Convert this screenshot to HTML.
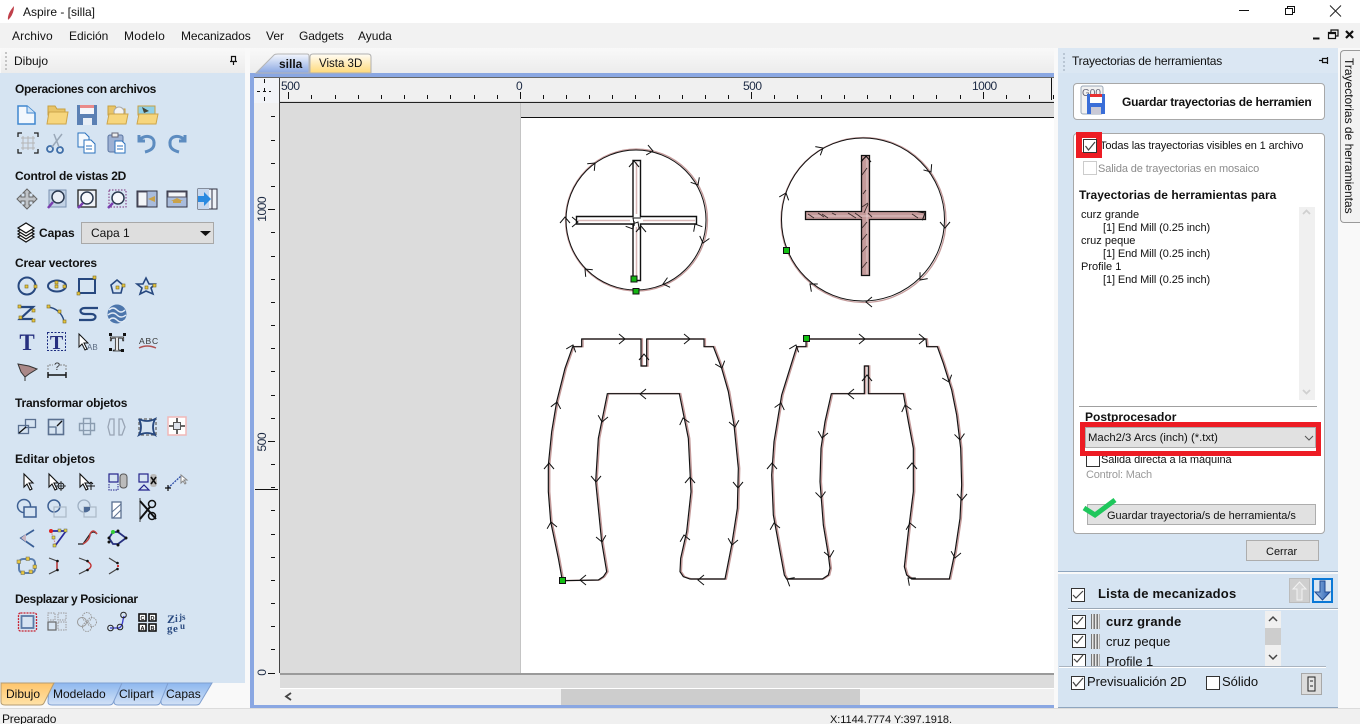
<!DOCTYPE html>
<html><head><meta charset="utf-8"><title>Aspire - [silla]</title>
<style>
html,body{margin:0;padding:0;background:#f9f9f9;width:1360px;height:724px;overflow:hidden}
body{position:relative;font:12px/14px "Liberation Sans",sans-serif;color:#111}
.a{position:absolute}
.t{position:absolute;white-space:nowrap;line-height:14px;font-size:12px}
.s{font-size:11px;margin-top:1px}
.b{font-weight:bold}
.cb{position:absolute;width:12px;height:12px;border:1px solid #333;background:#fff;box-sizing:content-box}
svg{position:absolute;overflow:visible}
</style></head><body>

<div class="a" style="left:0;top:0;width:1360px;height:23px;background:#fff"></div>
<div class="a" style="left:0;top:23px;width:1360px;height:25px;background:#f2f2f2"></div>
<div class="t" style="left:23px;top:5px">Aspire - [silla]</div>
<div class="t" style="left:12px;top:29px;letter-spacing:.1px">Archivo</div>
<div class="t" style="left:69px;top:29px">Edición</div>
<div class="t" style="left:124px;top:29px;letter-spacing:.3px">Modelo</div>
<div class="t" style="left:181px;top:29px;letter-spacing:-.1px">Mecanizados</div>
<div class="t" style="left:266px;top:29px">Ver</div>
<div class="t" style="left:299px;top:29px;letter-spacing:-.1px">Gadgets</div>
<div class="t" style="left:358px;top:29px">Ayuda</div>

<!-- backgrounds -->
<div class="a" style="left:0;top:48px;width:1360px;height:660px;background:#f9f9f9"></div>
<div class="a" style="left:0;top:73px;width:245px;height:610px;background:#d6e4f2"></div>
<div class="a" style="left:1px;top:48px;width:244px;height:25px;background:linear-gradient(#f9f9f9,#ececec)"></div>
<div class="t" style="left:14px;top:54px">Dibujo</div>
<div class="a" style="left:250px;top:48px;width:804px;height:25px;background:linear-gradient(#f9f9f9,#ececec)"></div>

<!-- canvas frame -->
<div class="a" style="left:250px;top:73px;width:804px;height:635px;background:#8aa7e2"></div>
<div class="a" style="left:254px;top:77px;width:800px;height:628px;background:#f0f0f0"></div>
<div class="a" style="left:254px;top:77px;width:800px;height:1px;background:#666"></div>
<div class="a" style="left:254px;top:78px;width:25px;height:25px;background:#f2f4f8"></div>
<div class="a" style="left:279px;top:101px;width:775px;height:1px;background:#ddd"></div>
<div class="a" style="left:279px;top:102px;width:775px;height:1px;background:#222"></div>
<div class="a" style="left:279px;top:78px;width:1px;height:595px;background:#444"></div>
<div class="a" style="left:280px;top:103px;width:240px;height:570px;background:#dcdcdc"></div>
<div class="a" style="left:520px;top:103px;width:1px;height:570px;background:#c4c4c4"></div>
<div class="a" style="left:521px;top:103px;width:533px;height:14px;background:#dcdcdc"></div>
<div class="a" style="left:521px;top:117px;width:533px;height:1px;background:#111"></div>
<div class="a" style="left:521px;top:118px;width:533px;height:555px;background:#fff"></div>
<div class="a" style="left:280px;top:673px;width:774px;height:2px;background:#9a9a9a"></div>
<div class="a" style="left:280px;top:675px;width:774px;height:13px;background:#dcdcdc"></div>
<div class="a" style="left:280px;top:688px;width:774px;height:1px;background:#fff"></div>
<div class="a" style="left:280px;top:689px;width:774px;height:16px;background:#f0f0f0"></div>
<div class="a" style="left:561px;top:689px;width:299px;height:16px;background:#cdcdcd"></div>

<!-- canvas tabs -->
<svg style="left:250px;top:48px" width="130" height="26">
<defs>
<linearGradient id="g1" x1="0" y1="0" x2="0" y2="1"><stop offset="0" stop-color="#f4f7fd"/><stop offset="1" stop-color="#8aa7e2"/></linearGradient>
<linearGradient id="g2" x1="0" y1="0" x2="0" y2="1"><stop offset="0" stop-color="#fffdf6"/><stop offset="1" stop-color="#ffd978"/></linearGradient>
</defs>
<path d="M6 25L24 7Q25 6 28 6H57Q59 6 59 8V25Z" fill="url(#g1)" stroke="#b5b5b5"/>
<path d="M60 25V9Q60 6 63 6H118Q121 6 121 9V25Z" fill="url(#g2)" stroke="#b0b0b0"/>
</svg>
<div class="t b" style="left:279px;top:57px">silla</div>
<div class="t" style="left:319px;top:57px;font-size:11.500px">Vista 3D</div>

<!-- rulers -->
<div class="t" style="left:281px;top:79px;color:#1c2a44;letter-spacing:-.5px">500</div>
<div class="t" style="left:516px;top:79px;color:#1c2a44">0</div>
<div class="t" style="left:743px;top:79px;color:#1c2a44;letter-spacing:-.5px">500</div>
<div class="t" style="left:972px;top:79px;color:#1c2a44;letter-spacing:-.5px">1000</div>
<div class="t" style="writing-mode:vertical-rl;transform:rotate(180deg);line-height:14px;left:255px;top:197px;color:#1c2a44;letter-spacing:-.5px">1000</div>
<div class="t" style="writing-mode:vertical-rl;transform:rotate(180deg);line-height:14px;left:255px;top:433px;color:#1c2a44;letter-spacing:-.5px">500</div>
<div class="t" style="writing-mode:vertical-rl;transform:rotate(180deg);line-height:14px;left:255px;top:669px;color:#1c2a44">0</div>

<svg style="left:0;top:0" width="1360" height="724">
<g stroke="#111" stroke-width="1" fill="none">
<path d="M288.500 92V99M311.500 95V99M335.500 95V99M358.500 95V99M381.500 95V99M404.500 95V99M427.500 95V99M450.500 95V99M474.500 95V99M497.500 95V99M520.500 92V99M543.500 95V99M566.500 95V99M589.500 95V99M612.500 95V99M635.500 95V99M659.500 95V99M682.500 95V99M705.500 95V99M728.500 95V99M751.500 92V99M774.500 95V99M797.500 95V99M821.500 95V99M844.500 95V99M867.500 95V99M890.500 95V99M913.500 95V99M936.500 95V99M960.500 95V99M983.500 92V99M1006.500 95V99M1029.500 95V99M1053.500 95V99M1051.500 78V100"/>
<path d="M271 116.500H275M271 140.500H275M271 163.500H275M271 186.500H275M268 209.500H275M271 232.500H275M271 256.500H275M271 279.500H275M271 302.500H275M271 325.500H275M271 348.500H275M271 371.500H275M271 395.500H275M271 418.500H275M268 441.500H275M271 464.500H275M271 487.500H275M271 510.500H275M271 534.500H275M271 557.500H275M271 580.500H275M271 603.500H275M271 626.500H275M271 649.500H275M268 673.500H275M255 489.500H278"/>
<path d="M264.500 79V102" stroke-dasharray="4 5"/><path d="M257 91.500H271" stroke-dasharray="3 3"/>
</g>
<path d="M291 693L286 696.500L291 700" fill="none" stroke="#444" stroke-width="1.800"/>

<defs>
<path id="ar" d="M-6 -5L0 0L-6 5" fill="none" stroke="#111" stroke-width="1"/>
<polygon id="p1" points="97,767 85,700 62,590 55,500 55,420 65,320 80,230 105,130 128,65 155,65 155,42 333,42 333,123 350,123 350,42 522,42 522,65 550,65 575,130 595,200 612,300 625,430 622,550 605,660 585,762 480,762 460,755 450,740 452,700 470,620 483,500 475,340 448,206 232,206 205,340 197,470 215,650 230,740 220,755 205,765"/>
<polygon id="p2" points="140,42 498,42 500,65 532,65 550,115 575,195 590,270 602,370 605,480 600,580 585,680 568,762 455,762 440,750 433,725 445,620 460,500 460,370 445,290 430,206 325,206 325,123 313,123 313,206 214,206 195,290 183,370 180,470 190,600 205,690 210,730 205,750 187,762 80,762 73,750 60,680 40,570 35,450 42,350 65,210 110,65 138,65 138,42"/>
</defs>

<!-- circle 1 -->
<circle cx="636.500" cy="220" r="71" fill="none" stroke="#c49a9a" stroke-width="1.300"/>
<circle cx="636" cy="220" r="70" fill="none" stroke="#111" stroke-width="1"/>
<path d="M633 160.500H640.500V216.500H696.500V224H640.500V280.500H633V224H576.500V216.500H633Z" fill="#fff" stroke="#111" stroke-width="1.400"/>
<path d="M636.500 162V214M636.500 227V279M578 220.500H630M643 220.500H695" stroke="#d9b8b8" stroke-width="1.500"/>
<g>
<use href="#ar" transform="translate(653 151) rotate(10)"/><use href="#ar" transform="translate(698 185) rotate(60)"/><use href="#ar" transform="translate(703 243) rotate(105)"/><use href="#ar" transform="translate(663 284) rotate(165)"/><use href="#ar" transform="translate(585 269) rotate(-135)"/><use href="#ar" transform="translate(565 217) rotate(-90)"/><use href="#ar" transform="translate(595 163) rotate(-45)"/>
<use href="#ar" transform="translate(634 161) rotate(-90)"/><use href="#ar" transform="translate(578 222) rotate(0)"/><use href="#ar" transform="translate(695 224) rotate(-120)"/><use href="#ar" transform="translate(633 218) rotate(-140)"/><use href="#ar" transform="translate(638 222) rotate(-60)"/><use href="#ar" transform="translate(633 229) rotate(60)"/><use href="#ar" transform="translate(641 226) rotate(-90)"/>
</g>
<rect x="631" y="276" width="6" height="6" fill="#13b513" stroke="#111"/>
<rect x="633" y="288.500" width="6" height="5.500" fill="#13b513" stroke="#111"/>

<!-- circle 2 -->
<circle cx="863.500" cy="220" r="82.500" fill="none" stroke="#c49a9a" stroke-width="1.300"/>
<circle cx="863" cy="219.500" r="81.500" fill="none" stroke="#111" stroke-width="1"/>
<path d="M861.500 155.500H869.500V211.500H925.500V219.500H869.500V275.500H861.500V219.500H805.500V211.500H861.500Z" fill="#c49a9a" stroke="#111" stroke-width="1.300"/>
<path d="M867 157V274M807 216H924" stroke="#f1e3e3" stroke-width=".8" opacity=".8"/>
<path d="M862 160L867 156M862 175L867 168M863 194L866 190M862 207L868 203M864 213L868 204M862 228L867 222M862 240L867 234M862 252L867 246M862 268L867 262M808 214L814 218M818 213L824 217M832 213L836 215M848 213L856 218M855 213L862 218M828 218L822 214M868 213L872 217M912 214L918 218" stroke="#3a2a2a" stroke-width=".9" fill="none"/>
<g>
<use href="#ar" transform="translate(823 148) rotate(-30)"/><use href="#ar" transform="translate(931 172) rotate(55)"/><use href="#ar" transform="translate(945 228) rotate(90)"/><use href="#ar" transform="translate(920 280) rotate(130)"/><use href="#ar" transform="translate(866 302) rotate(180)"/><use href="#ar" transform="translate(810 284) rotate(-140)"/><use href="#ar" transform="translate(786 193) rotate(-70)"/><use href="#ar" transform="translate(925 213) rotate(-30)"/><use href="#ar" transform="translate(866 156) rotate(-90)"/>
</g>
<rect x="783.500" y="247.500" width="6" height="6" fill="#13c013" stroke="#111"/>

<!-- pants 1 -->
<g transform="translate(530 325) scale(.33333)">
<use href="#p1" transform="translate(4 0)" fill="none" stroke="#c49a9a" stroke-width="4.500"/>
<use href="#p1" fill="none" stroke="#111" stroke-width="3.500"/>
</g>
<g transform="translate(530 325)">
<use href="#ar" transform="translate(95 14) rotate(0)"/><use href="#ar" transform="translate(160 14) rotate(0)"/><use href="#ar" transform="translate(43 20) rotate(-70)"/><use href="#ar" transform="translate(27 77) rotate(-78)"/><use href="#ar" transform="translate(19 138) rotate(-90)"/><use href="#ar" transform="translate(21 197) rotate(-100)"/>
<use href="#ar" transform="translate(192 43) rotate(70)"/><use href="#ar" transform="translate(205 102) rotate(80)"/><use href="#ar" transform="translate(208 163) rotate(90)"/><use href="#ar" transform="translate(202 220) rotate(100)"/>
<use href="#ar" transform="translate(50 255) rotate(180)"/><use href="#ar" transform="translate(168 255) rotate(180)"/><use href="#ar" transform="translate(110 69) rotate(180)"/>
<use href="#ar" transform="translate(72 97) rotate(100)"/><use href="#ar" transform="translate(66 157) rotate(90)"/><use href="#ar" transform="translate(72 217) rotate(80)"/>
<use href="#ar" transform="translate(160 152) rotate(-90)"/><use href="#ar" transform="translate(154 210) rotate(-100)"/><use href="#ar" transform="translate(153 93) rotate(-105)"/><use href="#ar" transform="translate(114 29) rotate(-90)"/>
</g>
<rect x="559.500" y="577.500" width="6" height="6" fill="#13c013" stroke="#111"/>

<!-- pants 2 -->
<g transform="translate(760 325) scale(.33333)">
<use href="#p2" transform="translate(4 0)" fill="none" stroke="#c49a9a" stroke-width="4.500"/>
<use href="#p2" fill="none" stroke="#111" stroke-width="3.500"/>
</g>
<g transform="translate(760 325)">
<use href="#ar" transform="translate(105 14) rotate(0)"/><use href="#ar" transform="translate(165 14) rotate(0)"/><use href="#ar" transform="translate(36 20) rotate(-70)"/><use href="#ar" transform="translate(21 78) rotate(-75)"/><use href="#ar" transform="translate(12 138) rotate(-90)"/><use href="#ar" transform="translate(14 198) rotate(-100)"/><use href="#ar" transform="translate(27 254) rotate(-150)"/>
<use href="#ar" transform="translate(189 57) rotate(70)"/><use href="#ar" transform="translate(200 115) rotate(85)"/><use href="#ar" transform="translate(202 175) rotate(90)"/><use href="#ar" transform="translate(195 233) rotate(100)"/>
<use href="#ar" transform="translate(88 69) rotate(180)"/><use href="#ar" transform="translate(62 113) rotate(100)"/><use href="#ar" transform="translate(61 173) rotate(85)"/><use href="#ar" transform="translate(70 232) rotate(80)"/>
<use href="#ar" transform="translate(145 80) rotate(-105)"/><use href="#ar" transform="translate(152 138) rotate(-90)"/><use href="#ar" transform="translate(150 198) rotate(-100)"/><use href="#ar" transform="translate(148 253) rotate(-140)"/><use href="#ar" transform="translate(107 50) rotate(-90)"/>
</g>
<rect x="803.500" y="335.500" width="6" height="6" fill="#13c013" stroke="#111"/>
</svg>

<!-- left panel text -->
<div class="t b" style="left:15px;top:82px;letter-spacing:-.38px">Operaciones con archivos</div>
<div class="t b" style="left:15px;top:169px;letter-spacing:-.25px">Control de vistas 2D</div>
<div class="t b" style="left:39px;top:226px;letter-spacing:-.1px">Capas</div>
<div class="t b" style="left:15px;top:256px;letter-spacing:-.15px">Crear vectores</div>
<div class="t b" style="left:15px;top:396px;letter-spacing:-.2px">Transformar objetos</div>
<div class="t b" style="left:15px;top:452px">Editar objetos</div>
<div class="t b" style="left:15px;top:592px;letter-spacing:-.4px">Desplazar y Posicionar</div>
<div class="a" style="left:81px;top:222px;width:131px;height:20px;background:#dedede;border:1px solid #a8a8a8"></div>
<div class="t" style="left:91px;top:226px">Capa 1</div>

<!-- left tabs + status -->
<svg style="left:0;top:683px" width="250" height="24">
<defs><linearGradient id="g3" x1="0" y1="0" x2="0" y2="1"><stop offset="0" stop-color="#8db7ef"/><stop offset="1" stop-color="#d3e2f6"/></linearGradient>
<linearGradient id="g4" x1="0" y1="0" x2="0" y2="1"><stop offset="0" stop-color="#ffc56b"/><stop offset="1" stop-color="#ffe2a8"/></linearGradient></defs>
<path d="M160 0H212L200 20Q199 22 196 22H164Q161 22 161 19Z" fill="url(#g3)" stroke="#7f9fd0"/>
<path d="M115 0H168L160 20Q159 22 156 22H118Q114 22 114 19Z" fill="url(#g3)" stroke="#7f9fd0"/>
<path d="M49 0H122L113 20Q112 22 109 22H52Q48 22 48 19Z" fill="url(#g3)" stroke="#7f9fd0"/>
<path d="M1 0H54L44 20Q43 22 40 22H5Q1 22 1 19Z" fill="url(#g4)" stroke="#b49c72"/>
</svg>
<div class="t" style="left:6px;top:687px">Dibujo</div>
<div class="t" style="left:53px;top:687px">Modelado</div>
<div class="t" style="left:119px;top:687px">Clipart</div>
<div class="t" style="left:166px;top:687px">Capas</div>
<div class="a" style="left:0;top:708px;width:1360px;height:16px;background:#f0f0f0;border-top:1px solid #dcdcdc;box-sizing:border-box"></div>
<div class="t" style="left:2px;top:712px;letter-spacing:-.2px">Preparado</div>
<div class="t s" style="left:830px;top:712px;letter-spacing:-.05px">X:1144.7774 Y:397.1918.</div>

<!-- right panel -->
<div class="a" style="left:1058px;top:48px;width:280px;height:25px;background:#dbe7f3"></div>
<div class="a" style="left:1058px;top:73px;width:280px;height:498px;background:#d6e4f2;border-bottom:1px solid #8fa6bf;box-sizing:content-box"></div>
<div class="a" style="left:1058px;top:574px;width:280px;height:134px;background:#d6e4f2;border-bottom:1px solid #8fa6bf;box-sizing:border-box"></div>
<div class="t" style="left:1072px;top:54px;letter-spacing:-.2px">Trayectorias de herramientas</div>
<div class="a" style="left:1340px;top:50px;width:19px;height:171px;background:#f2f2f2;border:1px solid #9a9a9a;border-radius:4px 0 0 4px;border-right:0"></div>
<div class="t" style="left:1342px;top:58px;writing-mode:vertical-rl;line-height:14px">Trayectorias de herramientas</div>

<div class="a" style="left:1073px;top:83px;width:250px;height:35px;background:#fff;border:1px solid #a8a8a8;border-radius:4px"></div>
<div class="a" style="left:1122px;top:95px;width:190px;height:14px;overflow:hidden"><span class="t b" style="left:0;top:0;letter-spacing:-.22px">Guardar trayectorias de herramientas</span></div>
<div class="a" style="left:1073px;top:133px;width:250px;height:399px;background:#fff;border:1px solid #a8a8a8;border-radius:4px"></div>
<div class="t s" style="left:1100px;top:138px;letter-spacing:-.12px">Todas las trayectorias visibles en 1 archivo</div>
<div class="t s" style="left:1098px;top:161px;color:#8c8c8c;letter-spacing:-.12px">Salida de trayectorias en mosaico</div>
<div class="cb" style="left:1083px;top:161px;border-color:#ccc"></div>
<div class="t b" style="left:1079px;top:188px;letter-spacing:.06px">Trayectorias de herramientas para</div>
<div class="t s" style="left:1081px;top:207px">curz grande</div>
<div class="t s" style="left:1103px;top:220px;letter-spacing:-.1px">[1] End Mill (0.25 inch)</div>
<div class="t s" style="left:1081px;top:233px">cruz peque</div>
<div class="t s" style="left:1103px;top:246px;letter-spacing:-.1px">[1] End Mill (0.25 inch)</div>
<div class="t s" style="left:1081px;top:259px">Profile 1</div>
<div class="t s" style="left:1103px;top:272px;letter-spacing:-.1px">[1] End Mill (0.25 inch)</div>
<div class="a" style="left:1299px;top:207px;width:16px;height:193px;background:#f0f0f0"></div>
<div class="a" style="left:1079px;top:406px;width:238px;height:1px;background:#a0a0a0"></div>
<div class="t b" style="left:1085px;top:410px">Postprocesador</div>
<div class="cb" style="left:1086px;top:453px"></div>
<div class="t s" style="left:1101px;top:452px;letter-spacing:-.08px">Salida directa a la máquina</div>
<div class="a" style="left:1080px;top:422px;width:241px;height:34px;border:5px solid #ed1c24;box-sizing:border-box;background:#fff"></div>
<div class="a" style="left:1085px;top:427px;width:231px;height:21px;background:#e1e1e1;border:1px solid #adadad;box-sizing:border-box"></div>
<div class="t" style="left:1088px;top:431px;font-size:11.300px">Mach2/3 Arcs (inch) (*.txt)</div>
<div class="t s" style="left:1086px;top:467px;color:#9a9a9a;letter-spacing:-.2px">Control: Mach</div>
<div class="a" style="left:1087px;top:504px;width:229px;height:21px;background:#e1e1e1;border:1px solid #adadad;box-sizing:border-box"></div>
<div class="t s" style="left:1107px;top:508px">Guardar trayectoria/s de herramienta/s</div>
<div class="a" style="left:1246px;top:540px;width:73px;height:21px;background:#e1e1e1;border:1px solid #adadad;box-sizing:border-box"></div>
<div class="t s" style="left:1266px;top:544px">Cerrar</div>
<div class="a" style="left:1076px;top:132px;width:26px;height:26px;border:6px solid #ed1c24;box-sizing:border-box"></div>
<div class="cb" style="left:1083px;top:139px"></div>

<div class="cb" style="left:1071px;top:588px"></div>
<div class="t b" style="left:1098px;top:587px;font-size:13px;letter-spacing:.2px">Lista de mecanizados</div>
<div class="a" style="left:1289px;top:578px;width:21px;height:25px;background:#cfcfcf;border:1px solid #bcbcbc;box-sizing:border-box"></div>
<div class="a" style="left:1312px;top:578px;width:21px;height:25px;background:#d9e6f3;border:2px solid #0a78d6;box-sizing:border-box"></div>
<div class="a" style="left:1068px;top:608px;width:270px;height:1px;background:#9aa7b5"></div>
<div class="a" style="left:1068px;top:609px;width:270px;height:1px;background:#fff"></div>
<div class="a" style="left:1265px;top:611px;width:16px;height:55px;background:#f0f0f0"></div>
<div class="a" style="left:1265px;top:628px;width:16px;height:17px;background:#cdcdcd"></div>
<div class="cb" style="left:1072px;top:615px"></div>
<div class="cb" style="left:1072px;top:634px"></div>
<div class="a" style="left:1060px;top:650px;width:200px;height:16px;overflow:hidden">
<div class="cb" style="left:12px;top:4px"></div>
<div class="a" style="left:31px;top:4px;width:9px;height:20px;background:repeating-linear-gradient(90deg,#777 0 1px,#e6e6e6 1px 2px,#aaa 2px 3px)"></div>
<div class="t" style="left:46px;top:5px;font-size:13px;letter-spacing:-.05px">Profile 1</div>
</div>
<div class="a" style="left:1091px;top:614px;width:9px;height:15px;background:repeating-linear-gradient(90deg,#777 0 1px,#e6e6e6 1px 2px,#aaa 2px 3px)"></div>
<div class="a" style="left:1091px;top:634px;width:9px;height:15px;background:repeating-linear-gradient(90deg,#777 0 1px,#e6e6e6 1px 2px,#aaa 2px 3px)"></div>
<div class="t b" style="left:1106px;top:615px;font-size:13px;letter-spacing:.15px">curz grande</div>
<div class="t" style="left:1106px;top:635px;font-size:13px">cruz peque</div>
<div class="a" style="left:1059px;top:666px;width:267px;height:1px;background:#aab4c0"></div>
<div class="a" style="left:1059px;top:667px;width:267px;height:1px;background:#fff"></div>
<div class="cb" style="left:1071px;top:676px"></div>
<div class="t" style="left:1087px;top:675px;font-size:13px;letter-spacing:-.05px">Previsualición 2D</div>
<div class="cb" style="left:1206px;top:676px"></div>
<div class="t" style="left:1222px;top:675px;font-size:13px">Sólido</div>
<div class="a" style="left:1301px;top:673px;width:21px;height:22px;background:#dcdcdc;border:1px solid #a8a8a8;box-sizing:border-box"></div>

<!-- all icons overlay -->
<svg style="left:0;top:0" width="1360" height="724" font-family="Liberation Sans, sans-serif">
<defs><linearGradient id="gs" x1="0" y1="0" x2="1" y2="0"><stop offset="0" stop-color="#8fb5e0"/><stop offset="1" stop-color="#2f62b5"/></linearGradient></defs>

<!-- window controls -->
<path d="M1239 10.500H1249" stroke="#111"/>
<path d="M1285.500 8.500H1292.500V14.500H1285.500ZM1287.500 8.500V6.500H1294.500V12.500H1292.500" fill="none" stroke="#111"/>
<path d="M1330 5.500L1341 16.500M1341 5.500L1330 16.500" stroke="#222" fill="none"/>
<path d="M1313 38.500H1319.500" stroke="#111" stroke-width="2"/>
<path d="M1328.500 32.500H1335.500V38.500H1328.500ZM1328.500 33.500H1335.500M1331 32V30H1338V36H1336" fill="none" stroke="#111" stroke-width="1.200"/>
<path d="M1346 31L1353 38M1353 31L1346 38" stroke="#111" stroke-width="2.200"/>
<path d="M8 20Q7 14 14 6Q14 13 10 18Z" fill="#c0404a"/>
<!-- grips -->
<g fill="#c4c4c4"><rect x="5" y="52" width="2" height="2"/><rect x="5" y="56" width="2" height="2"/><rect x="5" y="60" width="2" height="2"/><rect x="5" y="64" width="2" height="2"/><rect x="5" y="68" width="2" height="2"/></g>
<g fill="#b9c6d4"><rect x="1063" y="53" width="2" height="2"/><rect x="1063" y="57" width="2" height="2"/><rect x="1063" y="61" width="2" height="2"/><rect x="1063" y="65" width="2" height="2"/><rect x="1063" y="69" width="2" height="2"/></g>
<!-- pins -->
<path d="M231.500 56.500H235.500V61.500H231.500ZM230 61.500H237M233.500 62V65" fill="none" stroke="#111" stroke-width="1.200"/>
<path d="M1327.500 58.500V62.500H1322.500V58.500ZM1327.500 57V64M1322 60.500H1319" fill="none" stroke="#111" stroke-width="1.200"/>
<!-- capas dropdown arrow -->
<path d="M200 231H211L205.500 236Z" fill="#111"/>

<!-- file ops row1 -->
<g transform="translate(26 115)"><path d="M-8-9H1L9-2V9H-8Z" fill="#f2f7fd" stroke="#3f86cf" stroke-width="1.500"/><path d="M1-9V-2H9" fill="#cfe3f6" stroke="#3f86cf"/></g>
<g transform="translate(57 115)"><path d="M-9-9H-2L0-6H8V0H-9Z" fill="#e8c468" stroke="#c8a040"/><path d="M-10 9L-8-3H11L9 9Z" fill="#f7d67d" stroke="#cda54a"/></g>
<g transform="translate(87 115)"><rect x="-10" y="-10" width="20" height="20" fill="#5b80b4"/><rect x="-7" y="-10" width="14" height="9" fill="#f4f6fb"/><rect x="-7" y="-10" width="14" height="3" fill="#ea8a8a"/><rect x="-4" y="3" width="9" height="7" fill="#e8eef6"/></g>
<g transform="translate(117 115)"><path d="M-9-9H-2L0-6H8V0H-9Z" fill="#e8c468" stroke="#c8a040"/><circle cx="2" cy="-3" r="5" fill="#f3f3f3" stroke="#aaa"/><path d="M-10 9L-8-1H11L9 9Z" fill="#f7d67d" stroke="#cda54a"/></g>
<g transform="translate(147 115)"><path d="M-9-9H8V0H-9Z" fill="#8fd0e8" stroke="#c8a040"/><path d="M-5-8L2-4L-3-2Z" fill="#443"/><path d="M-10 9L-8-1H11L9 9Z" fill="#f7d67d" stroke="#cda54a"/></g>
<!-- row2 -->
<g transform="translate(28 143)" fill="none"><path d="M-5-7V7M0-7V7M5-7V7M-7-5H7M-7 0H7M-7 5H7" stroke="#b5b5b5"/><path d="M-10-6V-10H-6M6-10H10V-6M10 6V10H6M-6 10H-10V6" stroke="#222" stroke-width="1.300"/></g>
<g transform="translate(56 143)" fill="none" stroke="#3f6ea8" stroke-width="1.800"><circle cx="-6" cy="6" r="3"/><circle cx="4" cy="7" r="3"/><path d="M-4 4L6-9M3 4L-2-9" stroke="#9aa8b8" stroke-width="1.500"/></g>
<g transform="translate(86 143)"><path d="M-8-10H-1L3-6V4H-8Z" fill="#f3f8fd" stroke="#2b72bd"/><path d="M-2-3H5L9 1V10H-2Z" fill="#fff" stroke="#2b72bd"/><path d="M0 3H6M0 6H6" stroke="#2b72bd"/></g>
<g transform="translate(116 143)"><rect x="-8" y="-8" width="15" height="17" rx="2" fill="#9db1d3" stroke="#5b74a0"/><rect x="-4" y="-10" width="6" height="4" fill="#eee" stroke="#667"/><path d="M-1-2H6L9 1V10H-1Z" fill="#fff" stroke="#2b72bd"/><path d="M1 3H7M1 6H7" stroke="#2b72bd"/></g>
<g transform="translate(147 143)"><path d="M-8-8V-2H-2M-8-2C-4-9 8-8 7 1C7 6 2 8-2 9" fill="none" stroke="#5d8cc0" stroke-width="3"/></g>
<g transform="translate(177 143)"><path d="M8-8V-2H2M8-2C4-9-8-8-7 1C-7 6-2 8 2 9" fill="none" stroke="#5d8cc0" stroke-width="3"/></g>

<!-- view row -->
<g transform="translate(27 199)"><path d="M0-10L4-6H2V-2H6V-4L10 0L6 4V2H2V6H4L0 10L-4 6H-2V2H-6V4L-10 0L-6-4V-2H-2V-6H-4Z" fill="#c0c4c8" stroke="#666"/></g>
<g transform="translate(57 199)"><rect x="-8" y="-9" width="17" height="17" fill="#c3d3e6" stroke="#7a90b0"/><circle cx="1" cy="-2" r="6" fill="#e8edf5" stroke="#2c3a50" stroke-width="1.500"/><path d="M-4 3L-9 9" stroke="#7a3fb0" stroke-width="2.500"/></g>
<g transform="translate(87 199)"><rect x="-9" y="-9" width="18" height="17" fill="#eef2f7" stroke="#222" stroke-width="1.300"/><circle cx="0" cy="-1" r="6" fill="#f6f8fb" stroke="#2c3a50" stroke-width="1.500"/><path d="M-4 4L-9 9" stroke="#7a3fb0" stroke-width="2.500"/></g>
<g transform="translate(117 199)"><rect x="-8" y="-9" width="17" height="17" fill="none" stroke="#7a2a7a" stroke-dasharray="1.500 1.500"/><circle cx="1" cy="-1" r="6" fill="#f6f8fb" stroke="#2c3a50" stroke-width="1.500"/><path d="M-4 4L-9 9" stroke="#7a3fb0" stroke-width="2.500"/></g>
<g transform="translate(147 199)"><rect x="-10" y="-8" width="20" height="16" fill="#a9bcdc" stroke="#334"/><rect x="-9" y="-7" width="9" height="14" fill="#f3f5f8" stroke="#556"/><path d="M1 0L8-3V3Z" fill="#c9a24a"/></g>
<g transform="translate(177 199)"><rect x="-10" y="-8" width="20" height="16" fill="#a9bcdc" stroke="#334"/><rect x="-9" y="-7" width="18" height="5" fill="#f3f5f8" stroke="#556"/><path d="M-6 2L6 2L0-1ZM-4 2H4V4H-4Z" fill="#c9a24a"/></g>
<g transform="translate(207 199)"><rect x="-9" y="-10" width="19" height="20" fill="#eef2f8" stroke="#334"/><rect x="-9" y="-10" width="11" height="20" fill="#c8d8ee"/><path d="M-9-3H-3V-7L4 0L-3 7V3H-9Z" fill="#2b8ae0"/><path d="M5-10V10" stroke="#334"/></g>

<!-- capas icon -->
<g transform="translate(26 232)" stroke="#111" stroke-width="1.200" fill="#fff"><path d="M-8 5L0 10L8 5L0 0Z"/><path d="M-8 2L0 7L8 2L0-3Z"/><path d="M-8-1L0 4L8-1L0-6Z"/><path d="M-8-4L0 1L8-4L0-9Z"/></g>

<!-- crear vectores row1 -->
<g fill="none" stroke="#27487f" stroke-width="2">
<circle cx="27" cy="286" r="8.500"/><ellipse cx="57" cy="286" rx="9" ry="5.500"/><rect x="79" y="279" width="16" height="14"/><path d="M117 280L123 285L121 293H113L111 285Z" stroke-width="1.600"/><path d="M146 278L149 284H155L151 288L153 294L146 291L140 294L142 288L137 284H143Z" stroke-width="1.600"/>
<path d="M20 307H33L20 319H33" stroke-width="2.200"/><path d="M48 307C56 308 62 313 64 321" stroke-width="1.400"/><path d="M98 308H85C79 308 79 314 85 314H91C97 314 97 320 91 320H79" stroke-width="2.200"/>
</g>
<circle cx="117" cy="314" r="9.500" fill="#4d76ac"/><path d="M109 310Q113 306 117 310T125 310M108 315Q113 311 117 315T126 315M109 320Q113 316 117 320T125 320" fill="none" stroke="#e3ecf7" stroke-width="1.400"/>
<g fill="#e7c640" stroke="#7a6a22" stroke-width=".6"><rect x="25" y="285" width="3" height="3"/><rect x="34" y="285" width="3" height="3"/><rect x="55" y="281" width="3" height="3"/><rect x="55" y="285" width="3" height="3"/><rect x="63" y="285" width="3" height="3"/><rect x="93" y="276" width="3" height="3"/><rect x="77" y="292" width="3" height="3"/><rect x="122" y="284" width="3" height="3"/><rect x="116" y="286" width="3" height="3"/><rect x="145" y="286" width="3" height="3"/><rect x="153" y="284" width="3" height="3"/>
<rect x="18" y="305" width="3" height="3"/><rect x="32" y="309" width="3" height="3"/><rect x="19" y="316" width="3" height="3"/><rect x="32" y="319" width="3" height="3"/><rect x="47" y="305" width="3" height="3"/><rect x="58" y="310" width="3" height="3"/><rect x="63" y="320" width="3" height="3"/></g>
<!-- crear row3 -->
<text x="27" y="350" font-family="Liberation Serif,serif" font-weight="bold" font-size="23" fill="#27307f" text-anchor="middle">T</text>
<rect x="47.500" y="332.500" width="18" height="18" fill="none" stroke="#1a2a7f" stroke-dasharray="2 1.500"/>
<text x="56.500" y="349" font-family="Liberation Serif,serif" font-weight="bold" font-size="20" fill="#27307f" text-anchor="middle">T</text>
<path d="M79 334V347L82 344L85 350L87 349L84 343H88Z" fill="#fff" stroke="#111"/>
<text x="87" y="350" font-size="8" fill="#5a6a80">AB</text>
<text x="117" y="351" font-family="Liberation Serif,serif" font-weight="bold" font-size="21" fill="#e8e8e8" stroke="#222" stroke-width=".8" text-anchor="middle">T</text>
<g fill="#111"><rect x="109" y="333" width="3" height="3"/><rect x="123" y="333" width="3" height="3"/><rect x="109" y="348" width="3" height="3"/><rect x="121" y="349" width="3" height="3"/></g>
<text x="139" y="344" font-size="8.500" fill="#333" letter-spacing=".8">ABC</text>
<path d="M139 348Q147 344 156 348" fill="none" stroke="#b05050" stroke-width="1.400"/>
<!-- crear row4 -->
<path d="M18 364L29 366L37 369L29 374L25 377L21 372Z" fill="#a88" stroke="#333"/><path d="M25 377V381" stroke="#333"/>
<path d="M48 370V365H53M60 365H66V370" fill="none" stroke="#888" stroke-dasharray="2 1"/>
<path d="M48 375H66M48 372V378M66 372V378" stroke="#111" stroke-width="1.400" fill="none"/>
<text x="57" y="370" font-size="11" fill="#333" text-anchor="middle">?</text>

<!-- transform row -->
<g fill="none" stroke="#5a7090" stroke-width="1.300">
<rect x="18.500" y="425.500" width="10" height="8"/><rect x="25.500" y="419.500" width="10" height="8"/><path d="M19 433L26 427" stroke="#111"/>
<rect x="48.500" y="419.500" width="15" height="15" stroke-width="1.600"/><path d="M48 427H56V435" /><path d="M57 426L62 421" stroke="#111"/>
<path d="M83.500 418.500H90.500V423.500H94.500V430.500H90.500V434.500H83.500V430.500H79.500V423.500H83.500Z" stroke="#8a9cb0" stroke-width="1.400"/><path d="M83.500 423.500H90.500V430.500H83.500Z" stroke="#8a9cb0"/>
<path d="M114 419H110L108 427L110 435H114ZM119 419H122L125 427L122 435H119Z" stroke="#99a5b5"/>
<path d="M139 419H156V435H139Z" stroke="#666" stroke-dasharray="3 2"/><path d="M139 419Q147 423 155 419Q151 427 155 435Q147 431 139 435Q143 427 139 419" stroke="#27487f" stroke-width="1.800"/>
</g>
<rect x="168" y="417" width="18" height="18" fill="#fff" stroke="#f0b8b8" stroke-width="1.500"/><rect x="173.500" y="422.500" width="7" height="7" fill="#dde3ec" stroke="#555"/>
<path d="M177 418V422M177 430V434M169 426H173M181 426H185" stroke="#111" stroke-width="1.300"/>

<!-- editar row1 -->
<g fill="#fff" stroke="#111" stroke-width="1.100">
<path d="M24 474V487L27 484L30 490L32 489L29 483H33Z"/><path d="M49 474V487L52 484L55 490L57 489L54 483H58Z"/><path d="M80 474V487L83 484L86 490L88 489L85 483H89Z"/>
</g>
<circle cx="61" cy="486" r="3" fill="none" stroke="#111"/><path d="M61 481V491M56 486H66" stroke="#111" stroke-width=".8"/>
<path d="M91 482V490M87 486H95M91 482L89 484M91 482L93 484" stroke="#111" fill="none"/>
<rect x="109" y="474" width="9" height="8" fill="none" stroke="#22228a" stroke-width="1.200"/><path d="M109 484V490H118V484" fill="none" stroke="#22228a" stroke-dasharray="1.500 1"/><rect x="120" y="474" width="7" height="14" rx="3" fill="#bbb" stroke="#555"/>
<rect x="139" y="474" width="9" height="8" fill="none" stroke="#22228a" stroke-width="1.200"/><path d="M139 490L144 485L149 490Z" fill="none" stroke="#22228a" stroke-width="1.200"/><rect x="150" y="474" width="7" height="13" rx="3" fill="#bbb"/><path d="M151 477L156 484M156 477L151 484" stroke="#111" stroke-width="1.600"/>
<path d="M168 488L181 476" stroke="#3050a8" stroke-dasharray="2 1" stroke-width="1.300"/><path d="M168 488m-3 0h6m-3-3v6" stroke="#111" stroke-width="1.200"/><path d="M181 475V483L183 481L185 484L186 483L184 480H187Z" fill="#fff" stroke="#888"/>

<!-- editar row2 -->
<circle cx="24" cy="506" r="6.500" fill="#d6e4f2" stroke="#3d5f92" stroke-width="1.500"/><rect x="24" y="507" width="12" height="10" fill="#d6e4f2" stroke="#3d5f92" stroke-width="1.500"/>
<circle cx="54" cy="506" r="6" fill="none" stroke="#3d5f92" stroke-width="1.500"/><rect x="54" y="507" width="12" height="10" fill="none" stroke="#aab8c8" stroke-width="1.200"/>
<circle cx="84" cy="506" r="6" fill="none" stroke="#9fb0c3" stroke-width="1.300"/><rect x="84" y="507" width="12" height="10" fill="none" stroke="#aab8c8" stroke-width="1.200"/><path d="M84 507H90V510Q87 513 84 512Z" fill="#4d6a95"/>
<rect x="112" y="502" width="9" height="16" fill="#fff" stroke="#5a7090" stroke-width="1.300"/><path d="M112 512L121 504M113 518L121 510" stroke="#5a7090"/>
<g fill="none" stroke="#111" stroke-width="1.500"><circle cx="152" cy="504" r="3.500"/><circle cx="152" cy="516" r="3.500"/><path d="M140 501L156 519M150 507L140 519" stroke-width="2"/><path d="M140 498V522" stroke-width=".8"/></g>
<!-- editar row3 -->
<path d="M34 530L21 538L34 547" fill="none" stroke="#3a5f96" stroke-width="1.700"/><path d="M21 538L26 542V534Z" fill="#c9b4c0"/>
<path d="M51 531H66M66 531L55 546" fill="none" stroke="#2a2a9a" stroke-width="1.700"/><path d="M51 531L56 546" stroke="#d08080" stroke-dasharray="1.500 1"/><circle cx="51" cy="531" r="2" fill="#e02020"/><g fill="#e7d640" stroke="#555" stroke-width=".5"><rect x="58" y="529" width="3" height="3"/><rect x="64" y="529" width="3" height="3"/><rect x="53" y="544" width="3" height="3"/><rect x="52" y="536" width="3" height="3"/></g>
<path d="M78 544L83 544L90 534Q93 530 97 534" fill="none" stroke="#222" stroke-width="1.200"/><path d="M83 544Q90 540 90 534Q93 528 97 534" fill="none" stroke="#c04040" stroke-width="1.400"/>
<path d="M109 538L113 532H118L126 538L118 544H113Z" fill="none" stroke="#27307f" stroke-width="1.800"/><g fill="#111"><circle cx="109" cy="538" r="1.500"/><circle cx="118" cy="531" r="1.500"/><circle cx="126" cy="538" r="1.500"/><circle cx="118" cy="545" r="1.500"/><circle cx="109" cy="542" r="1.500"/></g><circle cx="113" cy="532" r="2" fill="#33cc33"/>
<!-- editar row4 -->
<rect x="19" y="559" width="16" height="14" rx="4" fill="none" stroke="#5b7faf" stroke-width="2"/><g fill="#e7c640" stroke="#665" stroke-width=".5"><rect x="17" y="560" width="3.500" height="3.500"/><rect x="26" y="557" width="3.500" height="3.500"/><rect x="33" y="565" width="3.500" height="3.500"/><rect x="29" y="570" width="3.500" height="3.500"/><rect x="21" y="571" width="3.500" height="3.500"/></g>
<path d="M49 558L57 561V570L49 574" fill="none" stroke="#444" stroke-width="1.200"/><path d="M57 561V570" stroke="#c03030" stroke-width="1.400"/><circle cx="57.500" cy="561" r="1.300" fill="#111"/><circle cx="57.500" cy="570" r="1.300" fill="#111"/>
<path d="M79 558L87 561M87 570L79 574" stroke="#444" stroke-width="1.200"/><path d="M87 561Q95 566 87 570" fill="none" stroke="#c03030" stroke-width="1.400"/><circle cx="87.500" cy="561" r="1.300" fill="#111"/><circle cx="87.500" cy="570" r="1.300" fill="#111"/>
<path d="M109 558L117 563M117 569L109 574" stroke="#444" stroke-width="1.200"/><circle cx="117.500" cy="563" r="1.300" fill="#111"/><circle cx="117.500" cy="569" r="1.300" fill="#111"/><circle cx="118" cy="566" r="1.100" fill="#d02020"/>

<!-- desplazar row -->
<rect x="18.500" y="613" width="18" height="18" rx="2" fill="none" stroke="#c82030" stroke-dasharray="2 1" stroke-width="1.300"/><rect x="21.500" y="616" width="12" height="12" fill="#d6e4f2" stroke="#5a7aa5" stroke-width="1.800"/>
<path d="M48 613H55V620H48ZM58 613H66V620H58ZM58 622H66V630H58Z" fill="none" stroke="#999" stroke-dasharray="1.500 1"/><rect x="48" y="622" width="8" height="8" fill="none" stroke="#666" stroke-width="1.200"/>
<g fill="none" stroke="#999" stroke-width="1"><circle cx="87" cy="617" r="4.500" stroke-dasharray="1.500 1"/><circle cx="82" cy="622" r="4.500"/><circle cx="92" cy="622" r="4.500" stroke-dasharray="1.500 1"/><circle cx="87" cy="627" r="4.500" stroke-dasharray="1.500 1"/></g>
<path d="M110 628H118Q122 628 123 620L124 616" fill="none" stroke="#3a3ac8" stroke-width="1.300"/><g fill="none" stroke="#222" stroke-width="1"><circle cx="110.500" cy="628" r="2.800"/><circle cx="120" cy="627" r="2.800"/><circle cx="123.500" cy="615" r="2.800"/></g>
<g fill="#fff" stroke="#111" stroke-width="1.600"><rect x="139" y="614" width="7" height="7"/><rect x="149" y="614" width="7" height="7"/><rect x="139" y="624" width="7" height="7"/><rect x="149" y="624" width="7" height="7"/></g>
<g font-size="5.500" font-weight="bold" text-anchor="middle" fill="#111"><text x="142.500" y="620">C</text><text x="152.500" y="620">D</text><text x="142.500" y="630">A</text><text x="152.500" y="630">B</text></g>
<g font-family="Liberation Serif,serif" font-weight="bold" fill="#2a4a80"><text x="167" y="623" font-size="12">Z</text><text x="175" y="622" font-size="10">i</text><text x="179" y="620" font-size="9">js</text><text x="167" y="632" font-size="11">g</text><text x="173" y="632" font-size="11">e</text><text x="180" y="629" font-size="9">u</text></g>

<!-- save icon right -->
<g transform="translate(1080 85)"><rect x="1" y="1" width="22" height="28" rx="2" fill="#f1f1f1" stroke="#9aa8b8"/><text x="2" y="11" font-size="10" fill="#667">G00</text><rect x="7" y="9" width="18" height="20" fill="#3a6ed8"/><rect x="10" y="9" width="12" height="9" fill="#fff"/><rect x="10" y="9" width="12" height="3" fill="#e83030"/><rect x="11" y="22" width="10" height="7" fill="#c9c9d6"/></g>
<!-- checkmarks -->
<g fill="none" stroke="#444" stroke-width="1.200">
<path d="M1085.500 146L1088.500 150L1095 142"/><path d="M1073 595L1076 598L1083 591"/><path d="M1074 621L1077 624L1083 617"/><path d="M1074 640L1077 643L1083 636"/><path d="M1074 659L1077 662L1083 655"/><path d="M1073 682L1076 686L1083 678"/>
</g>
<path d="M1084 508L1095 515L1115 500" fill="none" stroke="#1fc75c" stroke-width="5"/>
<!-- chevrons -->
<path d="M1303 214L1306.500 210.500L1310 214M1303 390L1306.500 393.500L1310 390" fill="none" stroke="#d0d0d0" stroke-width="1.800"/>
<path d="M1305 436L1309 440L1313 436" fill="none" stroke="#555"/>
<path d="M1269 621L1273 617L1277 621M1269 655L1273 659L1277 655" fill="none" stroke="#444" stroke-width="1.500"/>
<!-- up/down arrows -->
<path d="M1299.500 582L1306 589H1302V600H1297V589H1293Z" fill="#d6d6d6" stroke="#f2f2f2"/>
<path d="M1322.500 600L1315 592H1320V581H1325V592H1330Z" fill="url(#gs)" stroke="#224a90"/>
<rect x="1308" y="677" width="7" height="14" fill="#e5e5e5" stroke="#222"/><path d="M1310 681H1313M1310 686H1313" stroke="#222"/>
</svg>
</body></html>
